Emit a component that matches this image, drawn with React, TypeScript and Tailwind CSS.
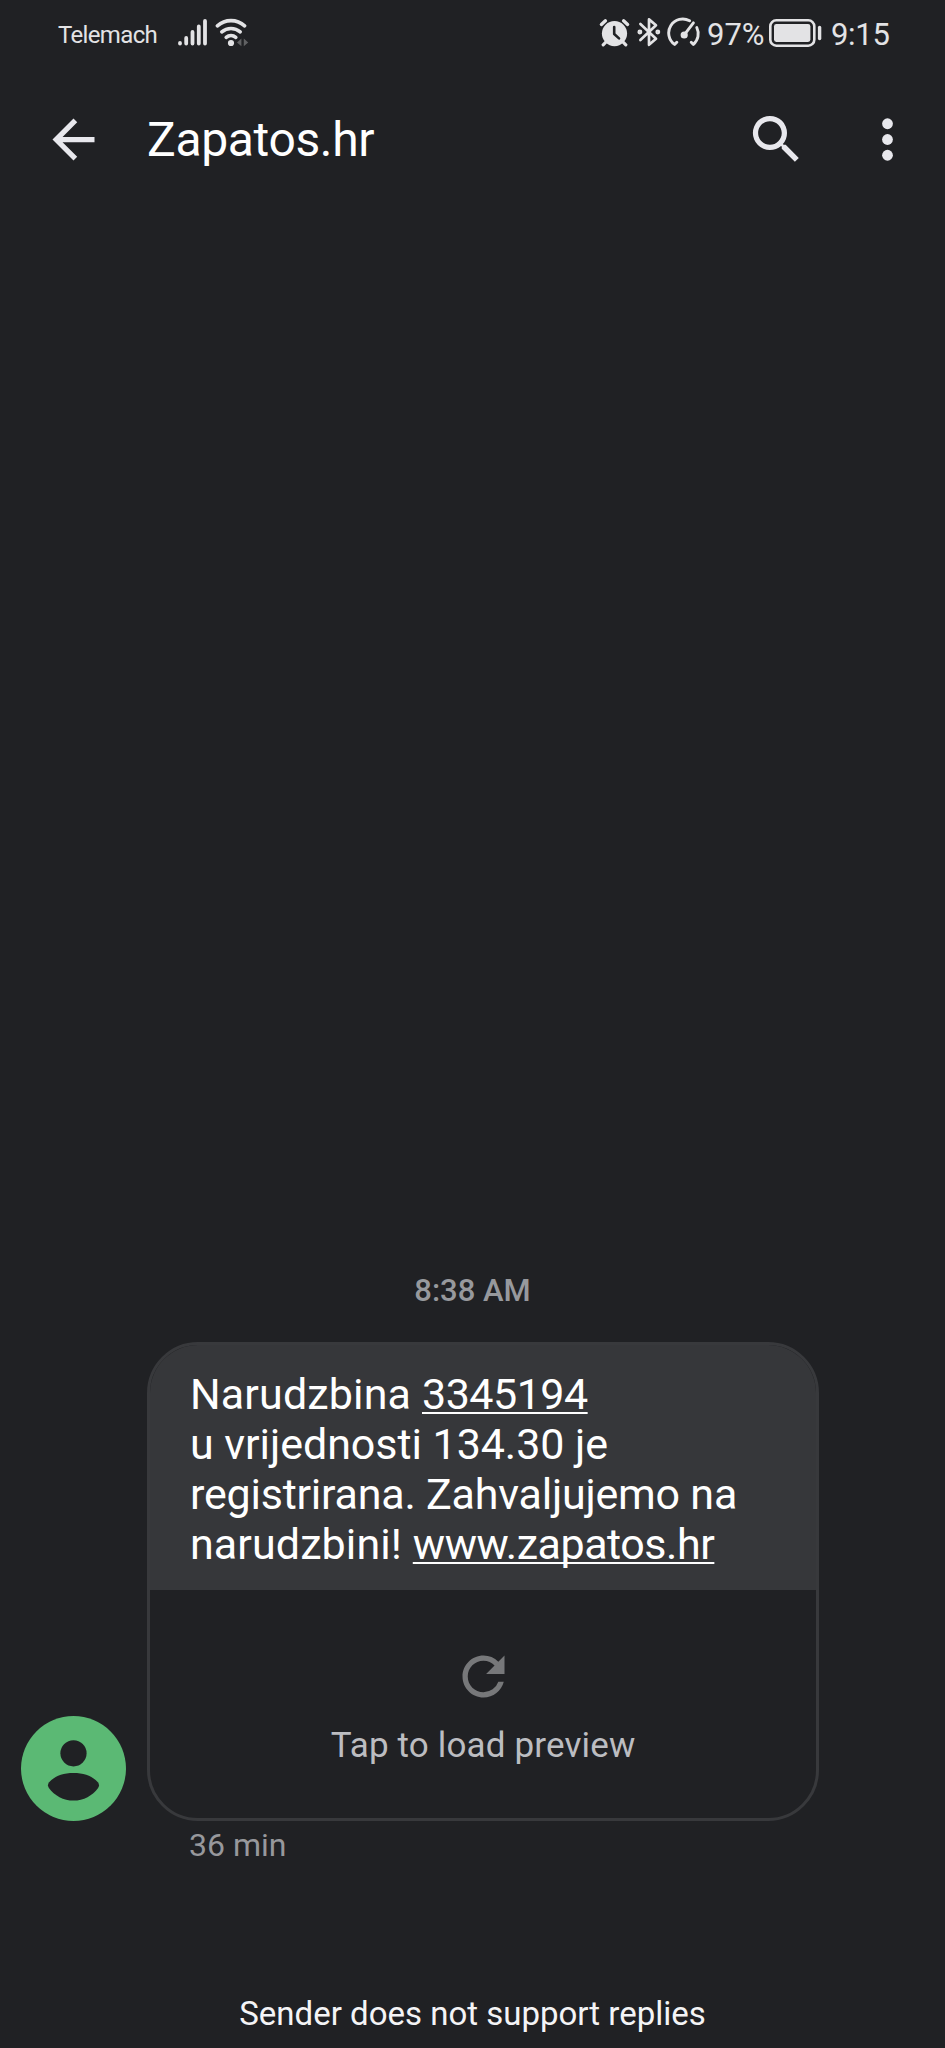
function SignalIcon() {
  return (
    <svg width="30" height="30" viewBox="0 0 30 30" fill="none" stroke="currentColor" strokeWidth="3.8" strokeLinecap="round">
      <path d="M3 26v.6M9.2 21v5.6M15.5 15v11.6M21.8 9.4v17.2M28 4v22.6" />
    </svg>
  );
}

function WifiIcon() {
  return (
    <svg width="34" height="30" viewBox="0 0 34 30" fill="none">
      <g stroke="currentColor" strokeWidth="3.6" strokeLinecap="round">
        <path d="M2.4 8.8a20.4 20.4 0 0 1 27.2 0" />
        <path d="M6.8 14.9a14 14 0 0 1 18.4 0" />
        <path d="M11.2 20.4a7.4 7.4 0 0 1 9.6 0" />
      </g>
      <circle cx="16" cy="26" r="3.1" fill="currentColor" />
      <path d="M26.4 21.6v7.6l-4.4-3.8zM28.8 21.6v7.6l4.4-3.8z" fill="#606163" />
    </svg>
  );
}

function AlarmIcon() {
  return (
    <svg width="33" height="30" viewBox="0 0 33 30" fill="none" strokeLinecap="round">
      <circle cx="16.5" cy="16.6" r="12.6" fill="currentColor" />
      <path d="M3.400 7.400 7.400 3.800M25.600 3.800l4 3.600" stroke="currentColor" strokeWidth="3.400" />
      <path d="m7.6 25.4-2.4 2.4M25.4 25.4l2.4 2.4" stroke="currentColor" strokeWidth="3.2" />
      <path d="M16.2 10v7l4.8 4.4" stroke="#202124" strokeWidth="2.6" strokeLinejoin="round" />
    </svg>
  );
}

function BluetoothIcon() {
  return (
    <svg width="24" height="30" viewBox="0 0 24 30" fill="none" stroke="currentColor" strokeWidth="2.7" strokeLinecap="round" strokeLinejoin="round">
      <path d="M3.4 7 19 21.800l-7 6V2.400l7 5.800L3.400 23" />
      <circle cx="2.9" cy="15" r="1.1" />
      <circle cx="20.8" cy="15" r="1.1" />
    </svg>
  );
}

function GaugeIcon() {
  return (
    <svg width="34" height="30" viewBox="0 0 34 30" fill="none" stroke="currentColor" strokeWidth="2.9" strokeLinecap="round" strokeLinejoin="round">
      <path d="M9.8 25.2 7.6 27.4A14 14 0 0 1 22.6 3.8" />
      <path d="M29.8 10.6a14 14 0 0 1-3.4 16.8l-2.2-2.2" />
      <path d="M26.400 5.800 17.400 17.600" />
      <circle cx="17.2" cy="18" r="2.6" fill="currentColor" strokeWidth="2" />
    </svg>
  );
}

function BatteryIcon() {
  return (
    <svg width="54" height="30" viewBox="0 0 54 30" fill="none">
      <rect x="1.3" y="3.3" width="44" height="25.4" rx="6" stroke="currentColor" strokeWidth="2.6" />
      <rect x="5" y="7" width="36.4" height="18" rx="2.4" fill="currentColor" />
      <path d="M50.6 10.4v11.2" stroke="currentColor" strokeWidth="3.4" strokeLinecap="round" />
    </svg>
  );
}

function StatusBar() {
  return (
    <div className="flex h-16 shrink-0 items-center text-[#e3e3e5]">
      <span className="ml-[58px] w-[119px] pt-[6px] text-[24px] leading-none tracking-[-0.65px]">Telemach</span>
      <SignalIcon />
      <div className="ml-2">
        <WifiIcon />
      </div>
      <div className="ml-auto flex items-center pr-[55px]">
        <AlarmIcon />
        <div className="ml-[6px]">
          <BluetoothIcon />
        </div>
        <div className="ml-[6px]">
          <GaugeIcon />
        </div>
        <span className="ml-[6px] w-[62px] pt-[5px] text-[31px] leading-none">97%</span>
        <BatteryIcon />
        <span className="ml-2 w-[59px] pt-[5px] text-[31px] leading-none tracking-[-0.3px] whitespace-nowrap">9:15</span>
      </div>
    </div>
  );
}

function AppBar() {
  return (
    <header className="flex h-[150px] shrink-0 items-center pr-[26px] pl-[42px] text-[#e8e8ed]">
      <button aria-label="Back">
        <svg width="63" height="63" viewBox="0 0 24 24" fill="currentColor">
          <path d="M20 11H7.83l5.59-5.59L12 4l-8 8 8 8 1.41-1.41L7.83 13H20v-2z" />
        </svg>
      </button>
      <h1 className="ml-[42px] flex-1 pt-[2px] text-[48px] leading-[60px] tracking-[-0.35px] text-white">Zapatos.hr</h1>
      <button aria-label="Search" className="mr-12">
        <svg width="63" height="63" viewBox="0 0 24 24" fill="currentColor">
          <path d="M15.5 14h-.79l-.28-.27A6.471 6.471 0 0 0 16 9.5 6.5 6.5 0 1 0 9.5 16c1.61 0 3.09-.59 4.23-1.57l.27.28v.79l5 4.99L20.49 19l-4.99-5zm-6 0C7.01 14 5 11.99 5 9.5S7.01 5 9.5 5 14 7.01 14 9.5 11.99 14 9.5 14z" />
        </svg>
      </button>
      <button aria-label="More options">
        <svg width="63" height="63" viewBox="0 0 24 24" fill="currentColor">
          <circle cx="12" cy="6" r="2.05" />
          <circle cx="12" cy="12" r="2.05" />
          <circle cx="12" cy="18" r="2.05" />
        </svg>
      </button>
    </header>
  );
}

function Avatar() {
  return (
    <svg width="105" height="105" viewBox="0 0 105 105" className="shrink-0">
      <circle cx="52.5" cy="52.5" r="52.5" fill="#5bb974" />
      <circle cx="52.5" cy="37.3" r="13.1" fill="#202124" />
      <path
        d="M52.5 57c11 0 19.500 3.600 24.400 9.300 1.400 1.700 1.500 3.700.2 5.600C71.600 79.600 62.500 84.500 52.500 84.500S33.400 79.600 27.900 71.900c-1.300-1.900-1.200-3.900.2-5.600C33 60.600 41.500 57 52.500 57z"
        fill="#202124"
      />
    </svg>
  );
}

function MessageBubble() {
  return (
    <div className="h-[479px] w-[672px] overflow-hidden rounded-[51px] border-[3px] border-[#38393c]">
      <div className="h-[245px] bg-[#36373a] pt-[24px] pl-[40px] text-[43px] leading-[50px] whitespace-nowrap text-white">
        <p>
          <span className="tracking-[0.15px]">Narudzbina </span>
          <a className="tracking-[-0.5px] underline decoration-[2px] underline-offset-[3px] [text-decoration-skip-ink:none]">3345194</a>
        </p>
        <p className="tracking-[-0.05px]">u vrijednosti 134.30 je</p>
        <p className="tracking-[-0.22px]">registrirana. Zahvaljujemo na</p>
        <p>
          <span className="tracking-[0.1px]">narudzbini! </span>
          <a className="tracking-[-0.45px] underline decoration-[2px] underline-offset-[3px] [text-decoration-skip-ink:none]">www.zapatos.hr</a>
        </p>
      </div>
      <div className="flex flex-col items-center pt-[55px]">
        <svg width="63" height="63" viewBox="0 0 24 24" fill="#77787a">
          <path d="M17.65 6.35A7.958 7.958 0 0 0 12 4c-4.420 0-7.990 3.580-7.990 8s3.570 8 7.990 8c3.730 0 6.840-2.550 7.730-6h-2.080A5.990 5.990 0 0 1 12 18c-3.310 0-6-2.690-6-6s2.690-6 6-6c1.660 0 3.140.69 4.220 1.780L13 11h7V4l-2.350 2.350z" />
        </svg>
        <p className="mt-[18px] text-[35px] leading-10 tracking-[0.15px] text-[#bcbdc1]">Tap to load preview</p>
      </div>
    </div>
  );
}

export default function App() {
  return (
    <div className="flex h-[2048px] w-[945px] flex-col overflow-hidden bg-[#202124] font-['Roboto',sans-serif]">
      <StatusBar />
      <AppBar />
      <main className="flex flex-1 flex-col justify-end pb-[129px]">
        <p className="mb-[33px] text-center text-[31px] leading-9 font-medium text-[#97999d]">8:38 AM</p>
        <div className="flex items-end gap-[21px] pl-[21px]">
          <Avatar />
          <MessageBubble />
        </div>
        <p className="mt-[4px] pl-[189px] text-[32px] leading-10 text-[#97989c]">36 min</p>
      </main>
      <footer className="pb-[14px] text-center text-[33px] leading-10 text-[#f4f4f6]">Sender does not support replies</footer>
    </div>
  );
}
